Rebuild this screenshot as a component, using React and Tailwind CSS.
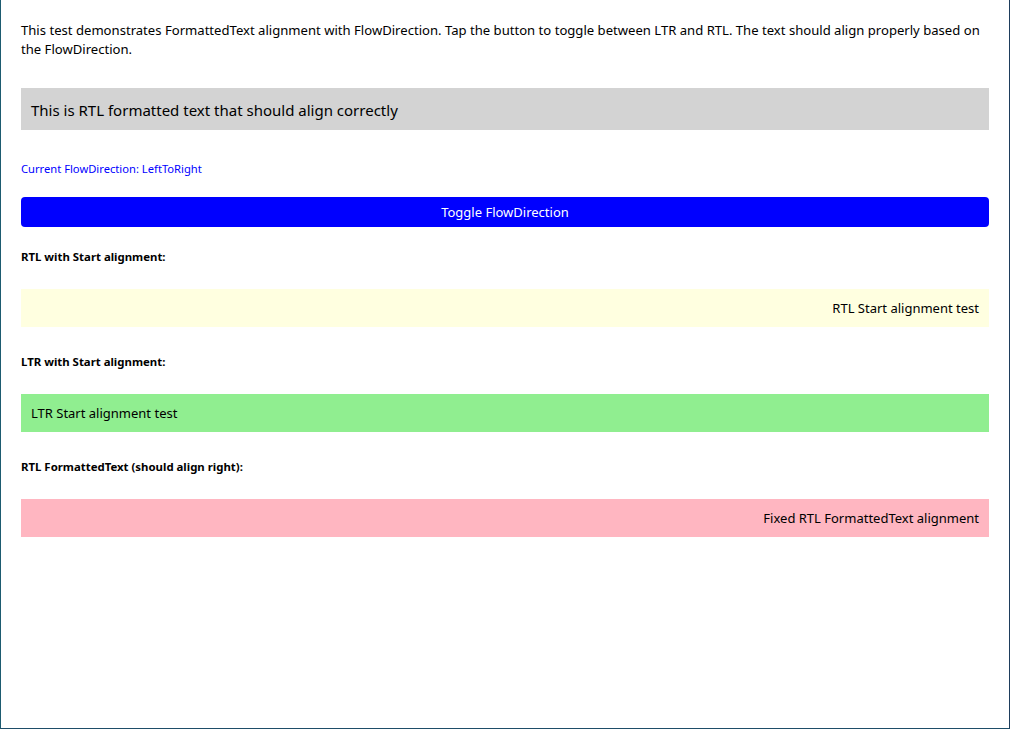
import React, { useState } from 'react';

const font = { fontFamily: '"Segoe UI", "Noto Sans", "Open Sans", sans-serif' };

export default function App() {
  const [rtl, setRtl] = useState(false);

  return (
    <div
      className="w-[1010px] h-[729px] bg-white border-l border-r border-b border-l-[#1d5b70] border-r-[#1e3d5c] border-b-[#1e4d68] box-border overflow-hidden text-black"
      style={font}
    >
      <div className="px-5 pt-[21px]">
        {/* Intro */}
        <p className="text-[13.1px] leading-[19px] pr-1">
          This test demonstrates FormattedText alignment with FlowDirection. Tap the button to toggle between LTR and RTL. The text should align properly based on the FlowDirection.
        </p>

        {/* Main formatted text */}
        <div className="mt-[29px] h-[42px] bg-[#d3d3d3] flex items-center px-[10px] pt-[3px] text-[15px]">
          This is RTL formatted text that should align correctly
        </div>

        <div className="mt-[31px] text-[11.2px] leading-4 text-[#0000ff]">
          Current FlowDirection: {rtl ? 'RightToLeft' : 'LeftToRight'}
        </div>

        <button
          onClick={() => setRtl(!rtl)}
          className="mt-5 w-full h-[30px] rounded bg-[#0000ff] text-white text-[13px] pt-[2px] flex items-center justify-center"
        >
          Toggle FlowDirection
        </button>

        {/* RTL start */}
        <div className="mt-[22px] text-[11.4px] leading-4 font-bold">RTL with Start alignment:</div>
        <div className="mt-6 h-[38px] bg-[#ffffe0] flex items-center justify-end px-[10px] pt-[2px] text-[13px]">
          RTL Start alignment test
        </div>

        {/* LTR start */}
        <div className="mt-[27px] text-[11.4px] leading-4 font-bold">LTR with Start alignment:</div>
        <div className="mt-6 h-[38px] bg-[#90ee90] flex items-center px-[10px] pt-[2px] text-[13px]">
          LTR Start alignment test
        </div>

        {/* RTL formatted */}
        <div className="mt-[27px] text-[11.4px] leading-4 font-bold">RTL FormattedText (should align right):</div>
        <div className="mt-6 h-[38px] bg-[#ffb6c1] flex items-center justify-end px-[10px] pt-[2px] text-[13px]">
          Fixed RTL FormattedText alignment
        </div>
      </div>
    </div>
  );
}
